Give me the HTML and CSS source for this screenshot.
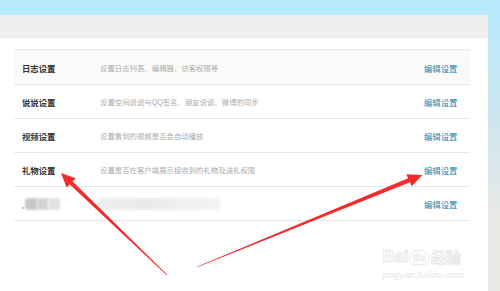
FILE: index.html
```html
<!DOCTYPE html>
<html lang="zh-CN">
<head>
<meta charset="utf-8">
<title>设置</title>
<link rel="stylesheet" href="styles.css">
</head>
<body>
<div class="top"></div>
<div class="main">
  <div class="content">
    <div class="bar"></div>
    <div class="panel">
      <div class="table">
        <div class="row hover">
          <span class="name">日志设置</span>
          <span class="desc">设置日志列表、编辑器、访客权限等</span>
          <a class="edit">编辑设置</a>
        </div>
        <div class="row">
          <span class="name">说说设置</span>
          <span class="desc">设置空间说说与QQ签名、朋友说说、微博的同步</span>
          <a class="edit">编辑设置</a>
        </div>
        <div class="row">
          <span class="name">视频设置</span>
          <span class="desc">设置看到的视频是否会自动播放</span>
          <a class="edit">编辑设置</a>
        </div>
        <div class="row">
          <span class="name">礼物设置</span>
          <span class="desc">设置是否在客户端展示接收到的礼物及送礼权限</span>
          <a class="edit">编辑设置</a>
        </div>
        <div class="row">
          <span class="name blur-name"><i class="dot"></i><i class="blob b1"></i><i class="blob b2"></i><i class="blob b3"></i></span>
          <span class="desc"><i class="blob-long"></i></span>
          <a class="edit">编辑设置</a>
        </div>
      </div>
    </div>
  </div>
  <div class="side"></div>
</div>
<div class="watermark">
  <div class="wm-logo"><span class="wm-bai">Bai</span><span class="wm-du">du</span><span class="wm-jy">经验</span></div>
  <div class="wm-url">jingyan.baidu.com</div>
</div>
<svg class="arrows" width="500" height="291" viewBox="0 0 500 291">
  <polygon fill="#f52b2b" points="61,173 75.8,178.2 72.6,181.4 167.3,274.7 166.7,275.3 69.6,184.2 66.6,187.4"/>
  <polygon fill="#f52b2b" points="422.5,175 411.6,186.2 409.9,182.3 197.1,267.3 196.9,266.7 408.1,178.2 406.4,174.3"/>
</svg>
</body>
</html>
```

FILE: styles.css
```css
html, body {
  margin: 0;
  padding: 0;
}
body {
  width: 500px;
  height: 291px;
  overflow: hidden;
  background: #ffffff;
  font-family: "Noto Sans CJK SC", "Noto Sans", sans-serif;
  position: relative;
}
.top {
  height: 15px;
  background: #b9e9fd;
}
.main {
  display: flex;
  height: 276px;
}
.content {
  width: 488px;
  display: flex;
  flex-direction: column;
}
.side {
  width: 12px;
  background: linear-gradient(to bottom, #b9e9fd 0%, #cfe6ee 40%, #eae9e6 75%, #ebeae7 100%);
}
.bar {
  height: 22px;
  background: #f0efed;
  border-bottom: 1px solid #e9e9e7;
}
.panel {
  flex: 1;
  background: #ffffff;
  padding: 11px 18px 0 14px;
}
.table {
  width: 456px;
  border-top: 2px solid #efefef;
}
.row {
  display: flex;
  align-items: center;
  height: 33px;
  border-bottom: 1px solid #e6e6e6;
}
.row.hover {
  background: #fafafa;
}
.name {
  width: 86px;
  padding-left: 8px;
  box-sizing: border-box;
  font-size: 8.4px;
  font-weight: bold;
  color: #333333;
  display: flex;
  align-items: center;
}
.desc {
  flex: 1;
  font-size: 7.4px;
  color: #acacac;
  display: flex;
  align-items: center;
}
.edit {
  width: 46px;
  font-size: 8.4px;
  color: #2f7fa6;
  text-decoration: none;
}
.blur-name {
  height: 14px;
}
.dot {
  width: 2px;
  height: 2px;
  background: #c8c8c8;
  margin-right: 1px;
  align-self: flex-end;
  margin-bottom: 2px;
}
.blob {
  display: block;
  height: 12px;
  filter: blur(1px);
}
.b1 { width: 12px; background: #c9c9c9; border-radius: 4px 0 0 4px; }
.b2 { width: 11px; background: #d4d4d4; }
.b3 { width: 12px; background: #e2e2e2; border-radius: 0 3px 3px 0; }
.blob-long {
  display: block;
  width: 122px;
  height: 12px;
  margin-left: -2px;
  background: linear-gradient(to right, #eeeeee, #e9e9e9 40%, #f0f0f0 70%, #f3f3f3);
  filter: blur(1px);
}
.watermark {
  position: absolute;
  left: 382px;
  top: 244px;
  color: #ececec;
  font-family: "Liberation Sans", Arial, sans-serif;
}
.wm-logo {
  display: flex;
  align-items: flex-end;
  height: 22px;
}
.wm-bai {
  font-size: 17px;
  font-weight: bold;
  color: #ffffff;
  -webkit-text-stroke: 1px #e9e9e9;
  line-height: 18px;
}
.wm-du {
  font-size: 11px;
  font-weight: bold;
  color: #ffffff;
  -webkit-text-stroke: 0.6px #e6e6e6;
  border: 1px solid #e9e9e9;
  border-radius: 8px 8px 6px 6px;
  padding: 0 2px;
  margin: 0 2px 1px 1px;
  line-height: 13px;
}
.wm-jy {
  font-family: "Noto Sans CJK SC", sans-serif;
  font-size: 15px;
  font-weight: bold;
  color: #ffffff;
  -webkit-text-stroke: 0.8px #e6e6e6;
  line-height: 18px;
}
.wm-url {
  font-size: 9.6px;
  font-weight: bold;
  color: #ececec;
  margin-top: 3px;
  letter-spacing: -0.1px;
}
.arrows {
  position: absolute;
  left: 0;
  top: 0;
  pointer-events: none;
}
```
